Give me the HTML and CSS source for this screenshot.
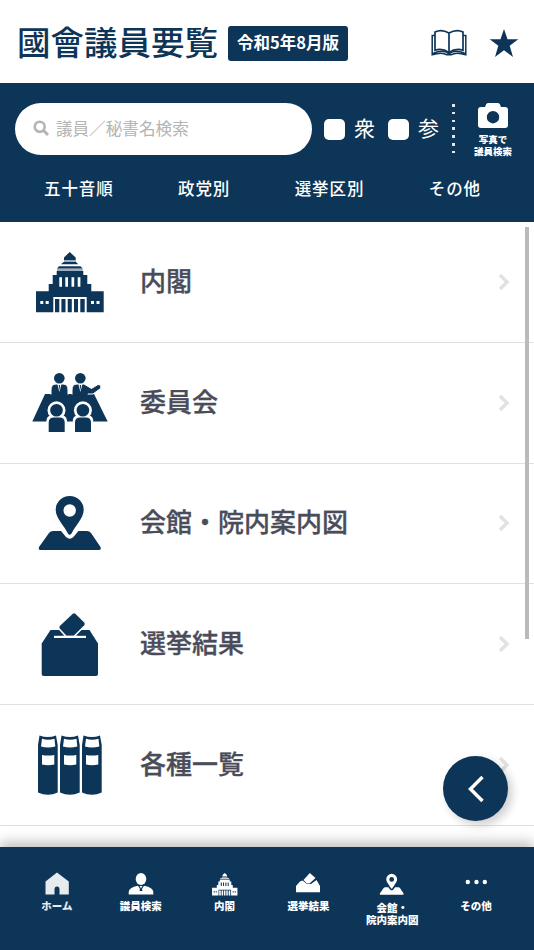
FILE: index.html
```html
<!DOCTYPE html>
<html lang="ja">

<head>
  <meta charset="UTF-8">
  <meta name="viewport" content="width=device-width, initial-scale=1.0">
  <title>國會議員要覧</title>
  <link rel="stylesheet" href="styles.css">
</head>

<body>

  <!-- Shared icons -->
  <svg class="icon-defs" width="0" height="0">
    <symbol id="icon-diet" viewBox="0 0 80 70">
      <path d="M39.7 5 L45.7 10.5 V13 H34 V10.5 Z M33.5 15 H46 L48.3 17.3 H31 Z M29 19.3 H50.5 L52.7 21.5 H27 Z"/>
      <path opacity=".4" d="M27 21.5 H52.7 V24 H27 Z M34 13 H46 V15 H34 Z"/>
      <path fill-rule="evenodd" d="M26.7 24 H53.3 V28 H57.3 V37 H61.3 V44.3 H73.7 V65.3 H56.7 V50 H23.3 V65.3 H6 V44.3 H18.7 V37 H22.7 V28 H26.7 Z M29.3 30.3 V39.7 H32 V30.3 Z M35.3 30.3 V39.7 H38 V30.3 Z M41.5 30.3 V39.7 H44.2 V30.3 Z M47.7 30.3 V39.7 H50.4 V30.3 Z M10.3 54 V57 H13.3 V54 Z M15.7 54 V57 H18.7 V54 Z M61 54 V57 H64 V54 Z M66.5 54 V57 H69.5 V54 Z"/>
      <path d="M25 52 H29.3 V65.3 H25 Z M31.4 52 H35.5 V65.3 H31.4 Z M37.7 52 H41.8 V65.3 H37.7 Z M44 52 H48 V65.3 H44 Z M50.3 52 H54.7 V65.3 H50.3 Z"/>
    </symbol>
    <symbol id="icon-map" viewBox="0 0 80 70">
      <path d="M23 43 H31 L36 49 Q39.7 52.5 43.4 49 L48.5 43 H57 Q59.5 43 61 45 L70.5 59 Q71.5 62 69 62 H10.5 Q8 62 9 59 L19 45 Q20.5 43 23 43 Z"/>
      <path fill-rule="evenodd" d="M39.7 8 A14 14 0 0 1 53.7 22 C53.7 30 45 38 41.5 45.5 Q39.7 48 37.9 45.5 C34.5 38 25.7 30 25.7 22 A14 14 0 0 1 39.7 8 Z M39.7 16.3 A6.2 6.2 0 1 0 39.7 28.7 A6.2 6.2 0 1 0 39.7 16.3 Z"/>
    </symbol>
  </svg>

  <header class="header">
    <h1 class="title">國會議員要覧</h1>
    <span class="version">令和5年8月版</span>
    <div class="header-icons">
      <svg class="book" width="36" height="28" viewBox="0 0 36 28" fill="none" stroke="currentColor">
        <path stroke-width="1.7" d="M18 4 Q10.5 -.3 4 3 V21.3 Q11 18.8 18 23.5 Q25 18.8 32 21.3 V3 Q25.500 -.3 18 4 Z M18 4 V26"/>
        <path stroke-width="1.500" d="M4 6.500 H1.200 V25.800 Q11 22.500 16 25.800 H20 Q25 22.500 34.800 25.800 V6.500 H32 M2 24.500 Q12 20 18 25 Q24 20 34 24.500"/>
      </svg>
      <svg width="30" height="28" viewBox="0 0 30 28" fill="currentColor">
        <path d="M15 0 L18.500 10.200 H29.300 L20.700 16.800 L24 28 L15 21.300 L6 28 L9.300 16.800 L.7 10.200 H11.500 Z"/>
      </svg>
    </div>
  </header>

  <div class="search-area">
    <div class="search-row">
      <div class="search-box">
        <svg width="17" height="17" viewBox="0 0 17 17" fill="none" stroke="#b4b4b4">
          <circle cx="6.700" cy="6.700" r="5" stroke-width="2.600"/>
          <path d="M10.500 10.500 L15 15" stroke-width="3"/>
        </svg>
        <span>議員／秘書名検索</span>
      </div>
      <div class="check"><span class="check-box"></span><span class="check-label">衆</span></div>
      <div class="check"><span class="check-box"></span><span class="check-label">参</span></div>
      <div class="dots"></div>
      <div class="photo-search">
        <svg width="30" height="25" viewBox="0 0 30 25">
          <path fill="#fff" fill-rule="evenodd" d="M10 0 H20 Q21.500 0 22 1.500 L23 4 H27 Q30 4 30 7 V22 Q30 25 27 25 H3 Q0 25 0 22 V7 Q0 4 3 4 H7 L8 1.500 Q8.500 0 10 0 Z M15 8 A6.200 6.200 0 1 0 15 20.400 A6.200 6.200 0 1 0 15 8 Z"/>
        </svg>
        <p>写真で<br>議員検索</p>
      </div>
    </div>
    <nav class="tabs">
      <span>五十音順</span>
      <span>政党別</span>
      <span>選挙区別</span>
      <span>その他</span>
    </nav>
  </div>

  <main class="menu">
    <div class="menu-item">
      <svg class="menu-icon"><use href="#icon-diet"/></svg>
      <span class="menu-label">内閣</span>
      <svg class="arrow" viewBox="0 0 12 18"><path d="M2 2 L9 9 L2 16"/></svg>
    </div>
    <div class="menu-item">
      <svg class="menu-icon" viewBox="0 0 80 70">
        <path d="M15 26 H64 L77.700 53.500 H2.300 Z"/>
        <g stroke="#fff" stroke-width="1">
          <path d="M21 26.500 V22 Q21 16 26 16 H33 Q38 16 38 22 V26.500"/>
          <path d="M42 26.500 V22 Q42 16 47 16 H54 L61.500 20.500 L68 16.500 Q72 17 70.500 20.500 L63 26 H58 V26.500"/>
        </g>
        <circle cx="29.300" cy="10.300" r="5.300"/>
        <circle cx="50.300" cy="10.300" r="5.300"/>
        <path fill="#fff" d="M27.300 16 H31.500 L29.400 24 Z M48.300 16 H52.500 L50.400 24 Z"/>
        <path d="M28.700 17 H30.100 L29.400 23 Z M49.700 17 H51.100 L50.400 23 Z"/>
        <!-- front row, outlined against the table -->
        <g fill="#fff">
          <circle cx="26.500" cy="42.300" r="9"/>
          <circle cx="52.900" cy="42.300" r="9"/>
          <path d="M16.500 54 V52 Q17 47 24 47 H29.500 Q36.400 47 36.900 52 V54 Z M42.800 54 V52 Q43.300 47 50.300 47 H55.800 Q62.700 47 63.200 52 V54 Z"/>
        </g>
        <circle cx="26.500" cy="42.300" r="6.300"/>
        <circle cx="52.900" cy="42.300" r="6.300"/>
        <path d="M18.700 63.900 V54.500 Q18.700 49.500 24 49.500 H29.500 Q34.700 49.500 34.700 54.500 V63.900 Z M45 63.900 V54.500 Q45 49.500 50.300 49.500 H55.800 Q61 49.500 61 54.500 V63.900 Z"/>
      </svg>
      <span class="menu-label">委員会</span>
      <svg class="arrow" viewBox="0 0 12 18"><path d="M2 2 L9 9 L2 16"/></svg>
    </div>
    <div class="menu-item">
      <svg class="menu-icon"><use href="#icon-map"/></svg>
      <span class="menu-label">会館・院内案内図</span>
      <svg class="arrow" viewBox="0 0 12 18"><path d="M2 2 L9 9 L2 16"/></svg>
    </div>
    <div class="menu-item">
      <svg class="menu-icon" viewBox="0 0 80 70">
        <path d="M20.500 21 H59.500 L68 34.500 V65 Q68 67 66 67 H13.700 Q11.700 67 11.700 65 V34.500 Z"/>
        <path fill="#fff" d="M24 26.800 H56 V29 H24 Z"/>
        <path stroke="#fff" stroke-width="3" paint-order="stroke" d="M42.800 4.700 Q44 3.700 45.300 4.700 L54.200 13.500 Q55.300 15 54.200 16.300 L43.700 26.800 H36.500 L29.800 19.500 Q28.800 18.200 29.800 17 Z"/>
        <path fill="#fff" d="M32 26.800 H48 V29 H32 Z"/>
      </svg>
      <span class="menu-label">選挙結果</span>
      <svg class="arrow" viewBox="0 0 12 18"><path d="M2 2 L9 9 L2 16"/></svg>
    </div>
    <div class="menu-item">
      <svg class="menu-icon" viewBox="0 0 80 70">
        <defs>
          <path id="binder" fill-rule="evenodd" d="M9.500 5.500 Q18 8.500 26 5.500 L27.700 15 V62.500 Q18 67 8 62.500 V15 Z M12 8.700 L11 16.500 Q18 18.300 25.300 16.500 L24.500 8.700 Q18 11 12 8.700 Z M12 25 V34.500 Q18 36 24.300 34.500 V25 Q18 26 12 25 Z"/>
        </defs>
        <use href="#binder"/>
        <use href="#binder" x="22"/>
        <use href="#binder" x="44"/>
      </svg>
      <span class="menu-label">各種一覧</span>
      <svg class="arrow" viewBox="0 0 12 18"><path d="M2 2 L9 9 L2 16"/></svg>
    </div>
    <div class="scrollbar"></div>
    <div class="back-button">
      <svg width="18" height="28" viewBox="0 0 18 28" fill="none" stroke="#fff" stroke-width="3.500"><path d="M15.500 2 L3.500 14 L15.500 26"/></svg>
    </div>
  </main>

  <footer class="bottom-nav">
    <div class="nav-item current">
      <svg viewBox="0 0 26 24"><path d="M13 .5 L24.800 9.500 V22.500 H15.500 V17.500 Q15.500 14.500 13 14.500 Q10.500 14.500 10.500 17.500 V22.500 H1.500 V9.500 Z"/></svg>
      <p>ホーム</p>
    </div>
    <div class="nav-item">
      <svg viewBox="0 0 26 24"><ellipse cx="13" cy="7" rx="5.300" ry="6"/><path d="M.7 22.500 V20 Q.7 15.500 10 13.800 L12 17 L11.500 19 H14.500 L14 17 L16 13.800 Q25.300 15.500 25.300 20 V22.500 Z M11.600 14 H14.400 L13 16.500 Z"/></svg>
      <p>議員検索</p>
    </div>
    <div class="nav-item">
      <svg><use href="#icon-diet" x="-2.200" y="-1" width="30" height="26.300"/></svg>
      <p>内閣</p>
    </div>
    <div class="nav-item">
      <svg viewBox="0 0 26 24"><path d="M5 9.500 L7.500 8.500 L12 12 H16 L21.500 8 L25 14 V20.300 H1 V14 Z"/><path d="M14.800 1 L20.500 6 L14.500 11.500 H12 L8.500 8 Z"/></svg>
      <p>選挙結果</p>
    </div>
    <div class="nav-item">
      <svg><use href="#icon-map" x="-2.700" y="-1.300" width="31" height="27.100"/></svg>
      <p class="two-lines">会館・<br>院内案内図</p>
    </div>
    <div class="nav-item">
      <svg viewBox="0 0 26 24"><circle cx="4.800" cy="10" r="2.200"/><circle cx="13.500" cy="10" r="2.200"/><circle cx="21.800" cy="10" r="2.200"/></svg>
      <p>その他</p>
    </div>
  </footer>

</body>

</html>
```
FILE: styles.css
```css
* {
  box-sizing: border-box;
}

body {
  font-family: 'Noto Sans CJK JP', sans-serif;
  margin: 0;
  height: 950px;
  display: flex;
  flex-direction: column;
  overflow: hidden;
  background-color: #fff;
  color: #0d3558;
}

p {
  margin: 0;
}

.icon-defs {
  position: absolute;
}

/* Header */
.header {
  display: flex;
  align-items: center;
  height: 83px;
  padding: 3px 15px 0 17px;
}

.title {
  margin: 0;
  padding-bottom: 4px;
  font-size: 33.5px;
  font-weight: 500;
  line-height: 40px;
}

.version {
  width: 120px;
  height: 35px;
  margin-left: 10px;
  border-radius: 3px;
  background-color: #0d3558;
  color: #fff;
  font-size: 16.5px;
  font-weight: 700;
  line-height: 32px;
  text-align: center;
}

.header-icons {
  display: flex;
  gap: 22px;
  margin-left: auto;
}

/* Search */
.search-area {
  height: 139px;
  background-color: #0d3558;
  color: #fff;
}

.search-row {
  display: flex;
  align-items: center;
  padding: 20px 0 0 15px;
}

.search-box {
  display: flex;
  align-items: center;
  gap: 6px;
  width: 297px;
  height: 52px;
  margin-right: 12px;
  padding: 0 18px 2px;
  border-radius: 26px;
  background-color: #fff;
  color: #b4b4b4;
  font-size: 16.6px;
}

.check {
  display: flex;
  align-items: center;
  gap: 9px;
  width: 64px;
  height: 52px;
}

.check-box {
  width: 21px;
  height: 21px;
  border-radius: 5px;
  background-color: #fff;
}

.check-label {
  padding-bottom: 5px;
  font-size: 21px;
}

.dots {
  width: 3px;
  height: 50px;
  background: repeating-linear-gradient(#dfe5ea 0 2.5px, transparent 2.5px 7.8px);
}

.photo-search {
  width: 76px;
  height: 52px;
  text-align: center;
}

.photo-search svg {
  display: block;
  margin: 0 auto 6px;
}

.photo-search p {
  font-size: 9.5px;
  font-weight: 900;
  line-height: 11.5px;
}

.tabs {
  display: flex;
  justify-content: space-between;
  padding: 19px 53px 0 44px;
  font-size: 16.5px;
  font-weight: 500;
  letter-spacing: 0.9px;
  line-height: 28px;
}

/* Menu list */
.menu {
  position: relative;
  height: 625px;
}

.menu-item {
  display: flex;
  align-items: center;
  height: 120.75px;
  padding: 0 24px 0 30px;
  border-bottom: 1px solid #e0e0e0;
}

.menu-icon {
  width: 80px;
  height: 70px;
  fill: #0d3558;
}

.menu-label {
  margin-left: 30px;
  padding-bottom: 5px;
  color: #4a4d59;
  font-size: 26px;
  font-weight: 500;
  -webkit-text-stroke: 0.3px #4a4d59;
}

.arrow {
  width: 12px;
  height: 18px;
  margin-left: auto;
  fill: none;
  stroke: #e2e2e2;
  stroke-width: 3.5;
}

.scrollbar {
  position: absolute;
  top: 5px;
  right: 5px;
  width: 4px;
  height: 412px;
  background-color: #bababa;
}

.back-button {
  position: absolute;
  top: 534px;
  left: 443px;
  display: flex;
  align-items: center;
  justify-content: center;
  width: 65px;
  height: 65px;
  border-radius: 50%;
  background-color: #0d3558;
  box-shadow: 4px 4px 10px rgba(0, 0, 0, 0.2);
}

/* Bottom navigation */
.bottom-nav {
  position: relative;
  display: flex;
  height: 103px;
  padding: 25px 16px 0 15px;
  background-color: #0d3558;
  box-shadow: 0 -5px 12px rgba(0, 0, 0, 0.25);
  color: #fff;
}

.nav-item {
  flex: 1;
  text-align: center;
}

.nav-item svg {
  display: block;
  width: 26px;
  height: 24px;
  margin: 0 auto 4px;
  fill: #fff;
}

.nav-item p {
  font-size: 10.5px;
  font-weight: 900;
  line-height: 11.5px;
  white-space: nowrap;
}

.nav-item .two-lines {
  padding-top: 2px;
}

.current {
  opacity: 0.9;
}
```
